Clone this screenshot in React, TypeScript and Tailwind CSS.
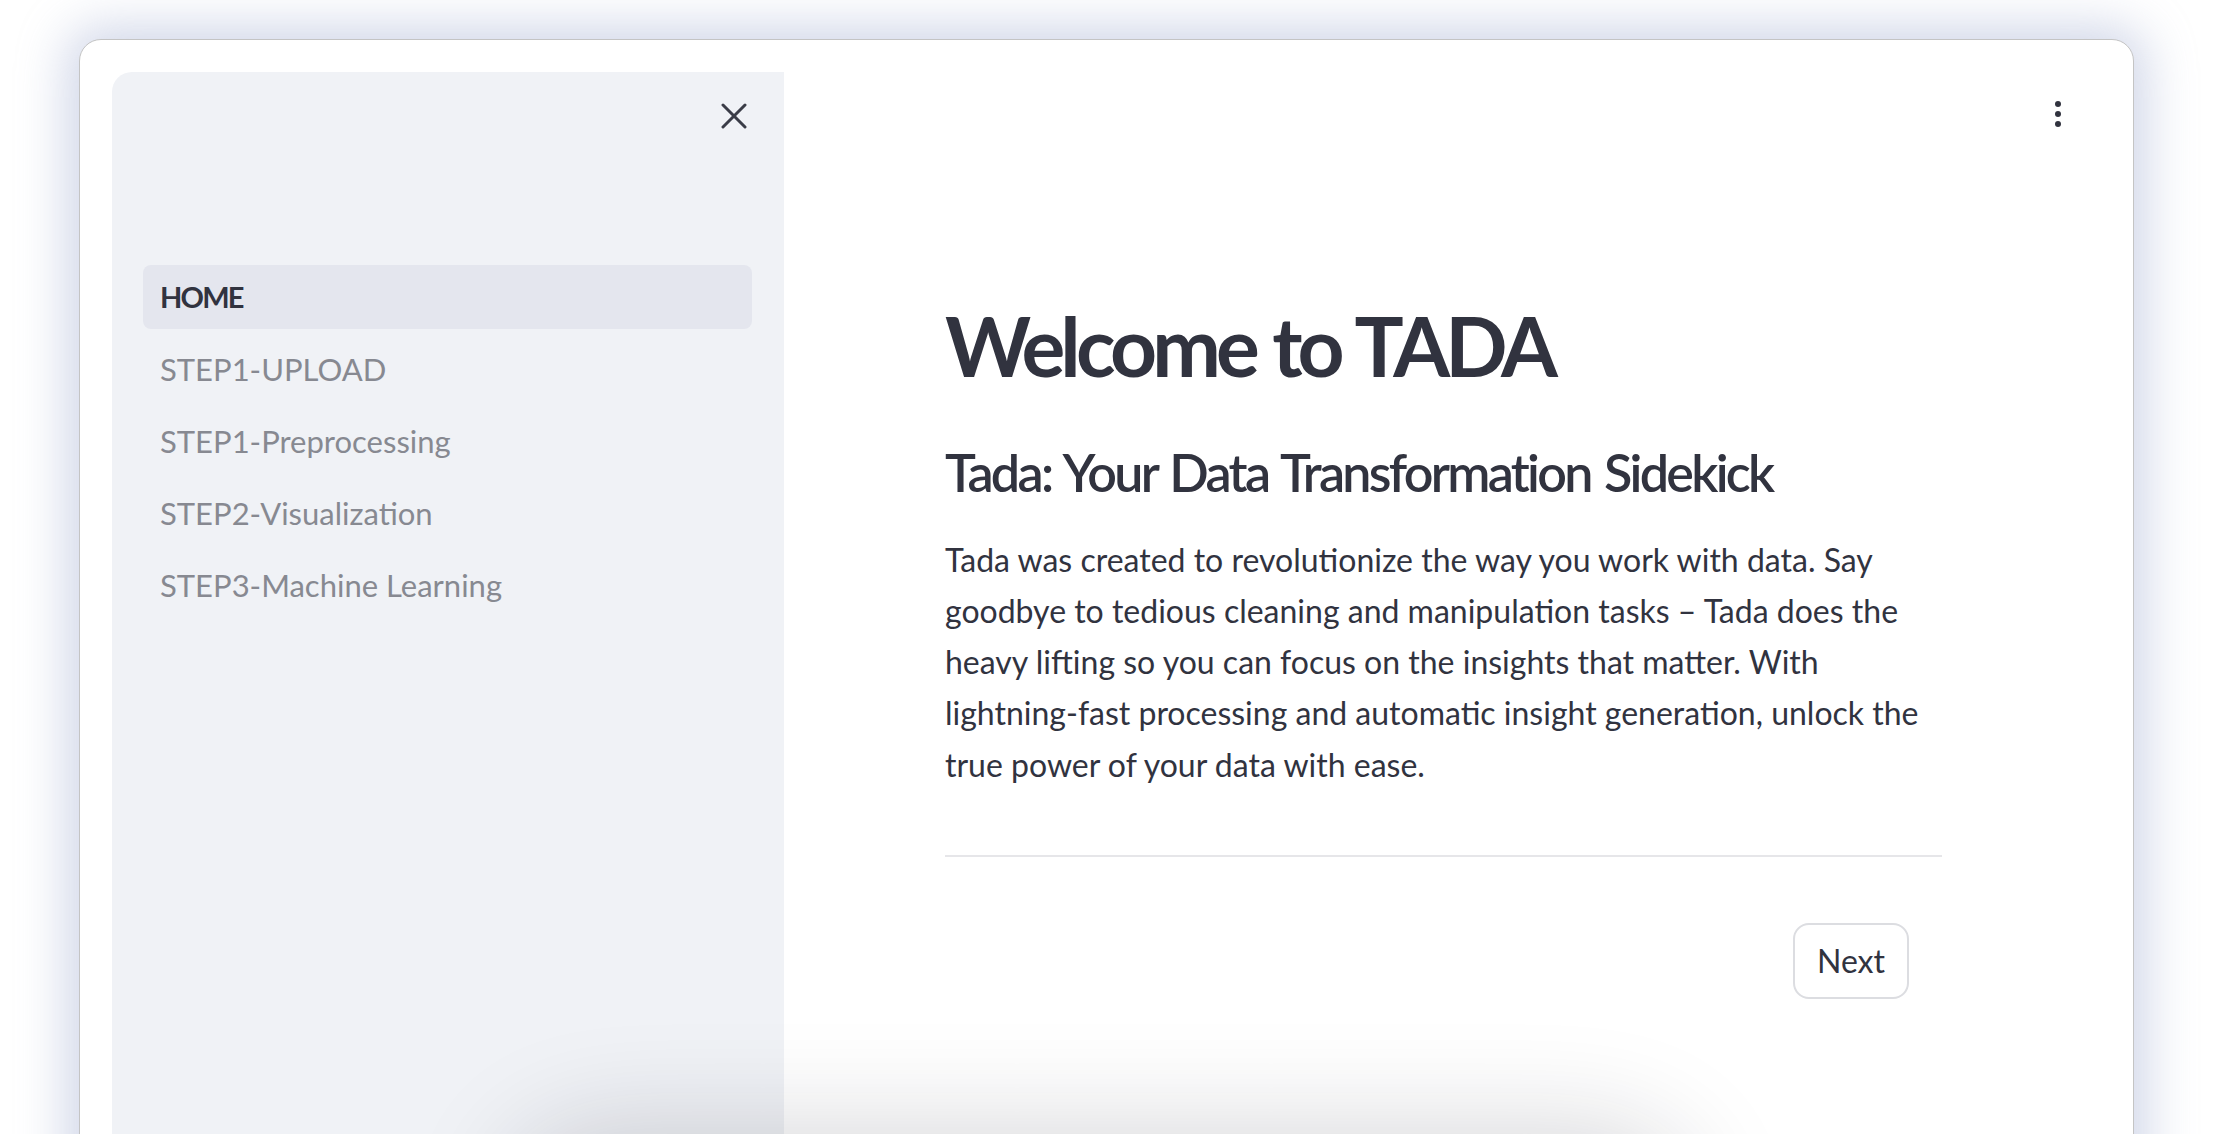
import React from "react";

const navItems = [
  "STEP1-UPLOAD",
  "STEP1-Preprocessing",
  "STEP2-Visualization",
  "STEP3-Machine Learning",
];

export default function App() {
  return (
    <div className="relative w-[2226px] h-[1134px] overflow-hidden bg-white font-['Lato',sans-serif] text-[#31333f]">
      <div className="ml-[79px] mt-[39px] mr-[92px] h-[1200px] rounded-[22px] border border-[#c4c4c4] bg-white shadow-[0_0_50px_12px_rgba(188,196,222,0.7)] pl-[32px] pt-[32px] flex">
        {/* Sidebar */}
        <div className="w-[672px] shrink-0 bg-[#f0f2f6] rounded-tl-[20px] flex flex-col">
          <div className="flex justify-end pt-[31px] pr-[37px]">
            <svg width="26" height="26" viewBox="0 0 26 26" className="text-[#3a3c47]">
              <line x1="2" y1="2" x2="24" y2="24" stroke="currentColor" strokeWidth="3" strokeLinecap="round" />
              <line x1="24" y1="2" x2="2" y2="24" stroke="currentColor" strokeWidth="3" strokeLinecap="round" />
            </svg>
          </div>
          <nav className="mt-[136px] pl-[31px] pr-[32px] flex flex-col gap-[8px]">
            <div className="h-[64px] rounded-[8px] bg-[#e4e6ee] flex items-center pl-[17px] text-[29px] tracking-[-1.8px] font-bold text-[#31333f]">
              HOME
            </div>
            {navItems.map((item) => (
              <div key={item} className="h-[64px] flex items-center pl-[17px] text-[31px] text-[#878991]">
                {item}
              </div>
            ))}
          </nav>
        </div>

        {/* Main */}
        <div className="relative flex-1">
          <div className="absolute right-[72px] top-[29px] flex flex-col gap-[4px]">
            <span className="block w-[6px] h-[6px] rounded-full bg-[#31333f]" />
            <span className="block w-[6px] h-[6px] rounded-full bg-[#31333f]" />
            <span className="block w-[6px] h-[6px] rounded-full bg-[#31333f]" />
          </div>
          <div className="ml-[161px] w-[997px] pt-[224px]">
            <h1 className="text-[82px] leading-[1.2] font-bold tracking-[-4.8px] [word-spacing:2px]">Welcome to TADA</h1>
            <h3 className="mt-[47px] text-[52px] leading-[1.2] font-semibold tracking-[-2.7px] [word-spacing:3px]">
              Tada: Your Data Transformation Sidekick
            </h3>
            <p className="mt-[30px] text-[32px] leading-[51.2px] text-[#31333f]">
              Tada was created to revolutionize the way you work with data. Say
              <br />
              goodbye to tedious cleaning and manipulation tasks – Tada does the
              <br />
              heavy lifting so you can focus on the insights that matter. With
              <br />
              lightning-fast processing and automatic insight generation, unlock the
              <br />
              true power of your data with ease.
            </p>
            <div className="mt-[65px] h-[2px] bg-[#e6e6e9]" />
            <div className="mt-[66px] flex justify-end pr-[33px]">
              <button className="w-[116px] h-[76px] rounded-[16px] border-2 border-[#dcdde1] bg-white text-[32px] text-[#31333f] flex items-center justify-center">
                Next
              </button>
            </div>
          </div>
        </div>
      </div>
      {/* shadow from a floating element below the fold */}
      <div className="absolute left-[540px] top-[1160px] w-[1120px] h-[200px] rounded-[60px] bg-white shadow-[0_0_110px_30px_rgba(20,24,40,0.18)]" />
    </div>
  );
}
